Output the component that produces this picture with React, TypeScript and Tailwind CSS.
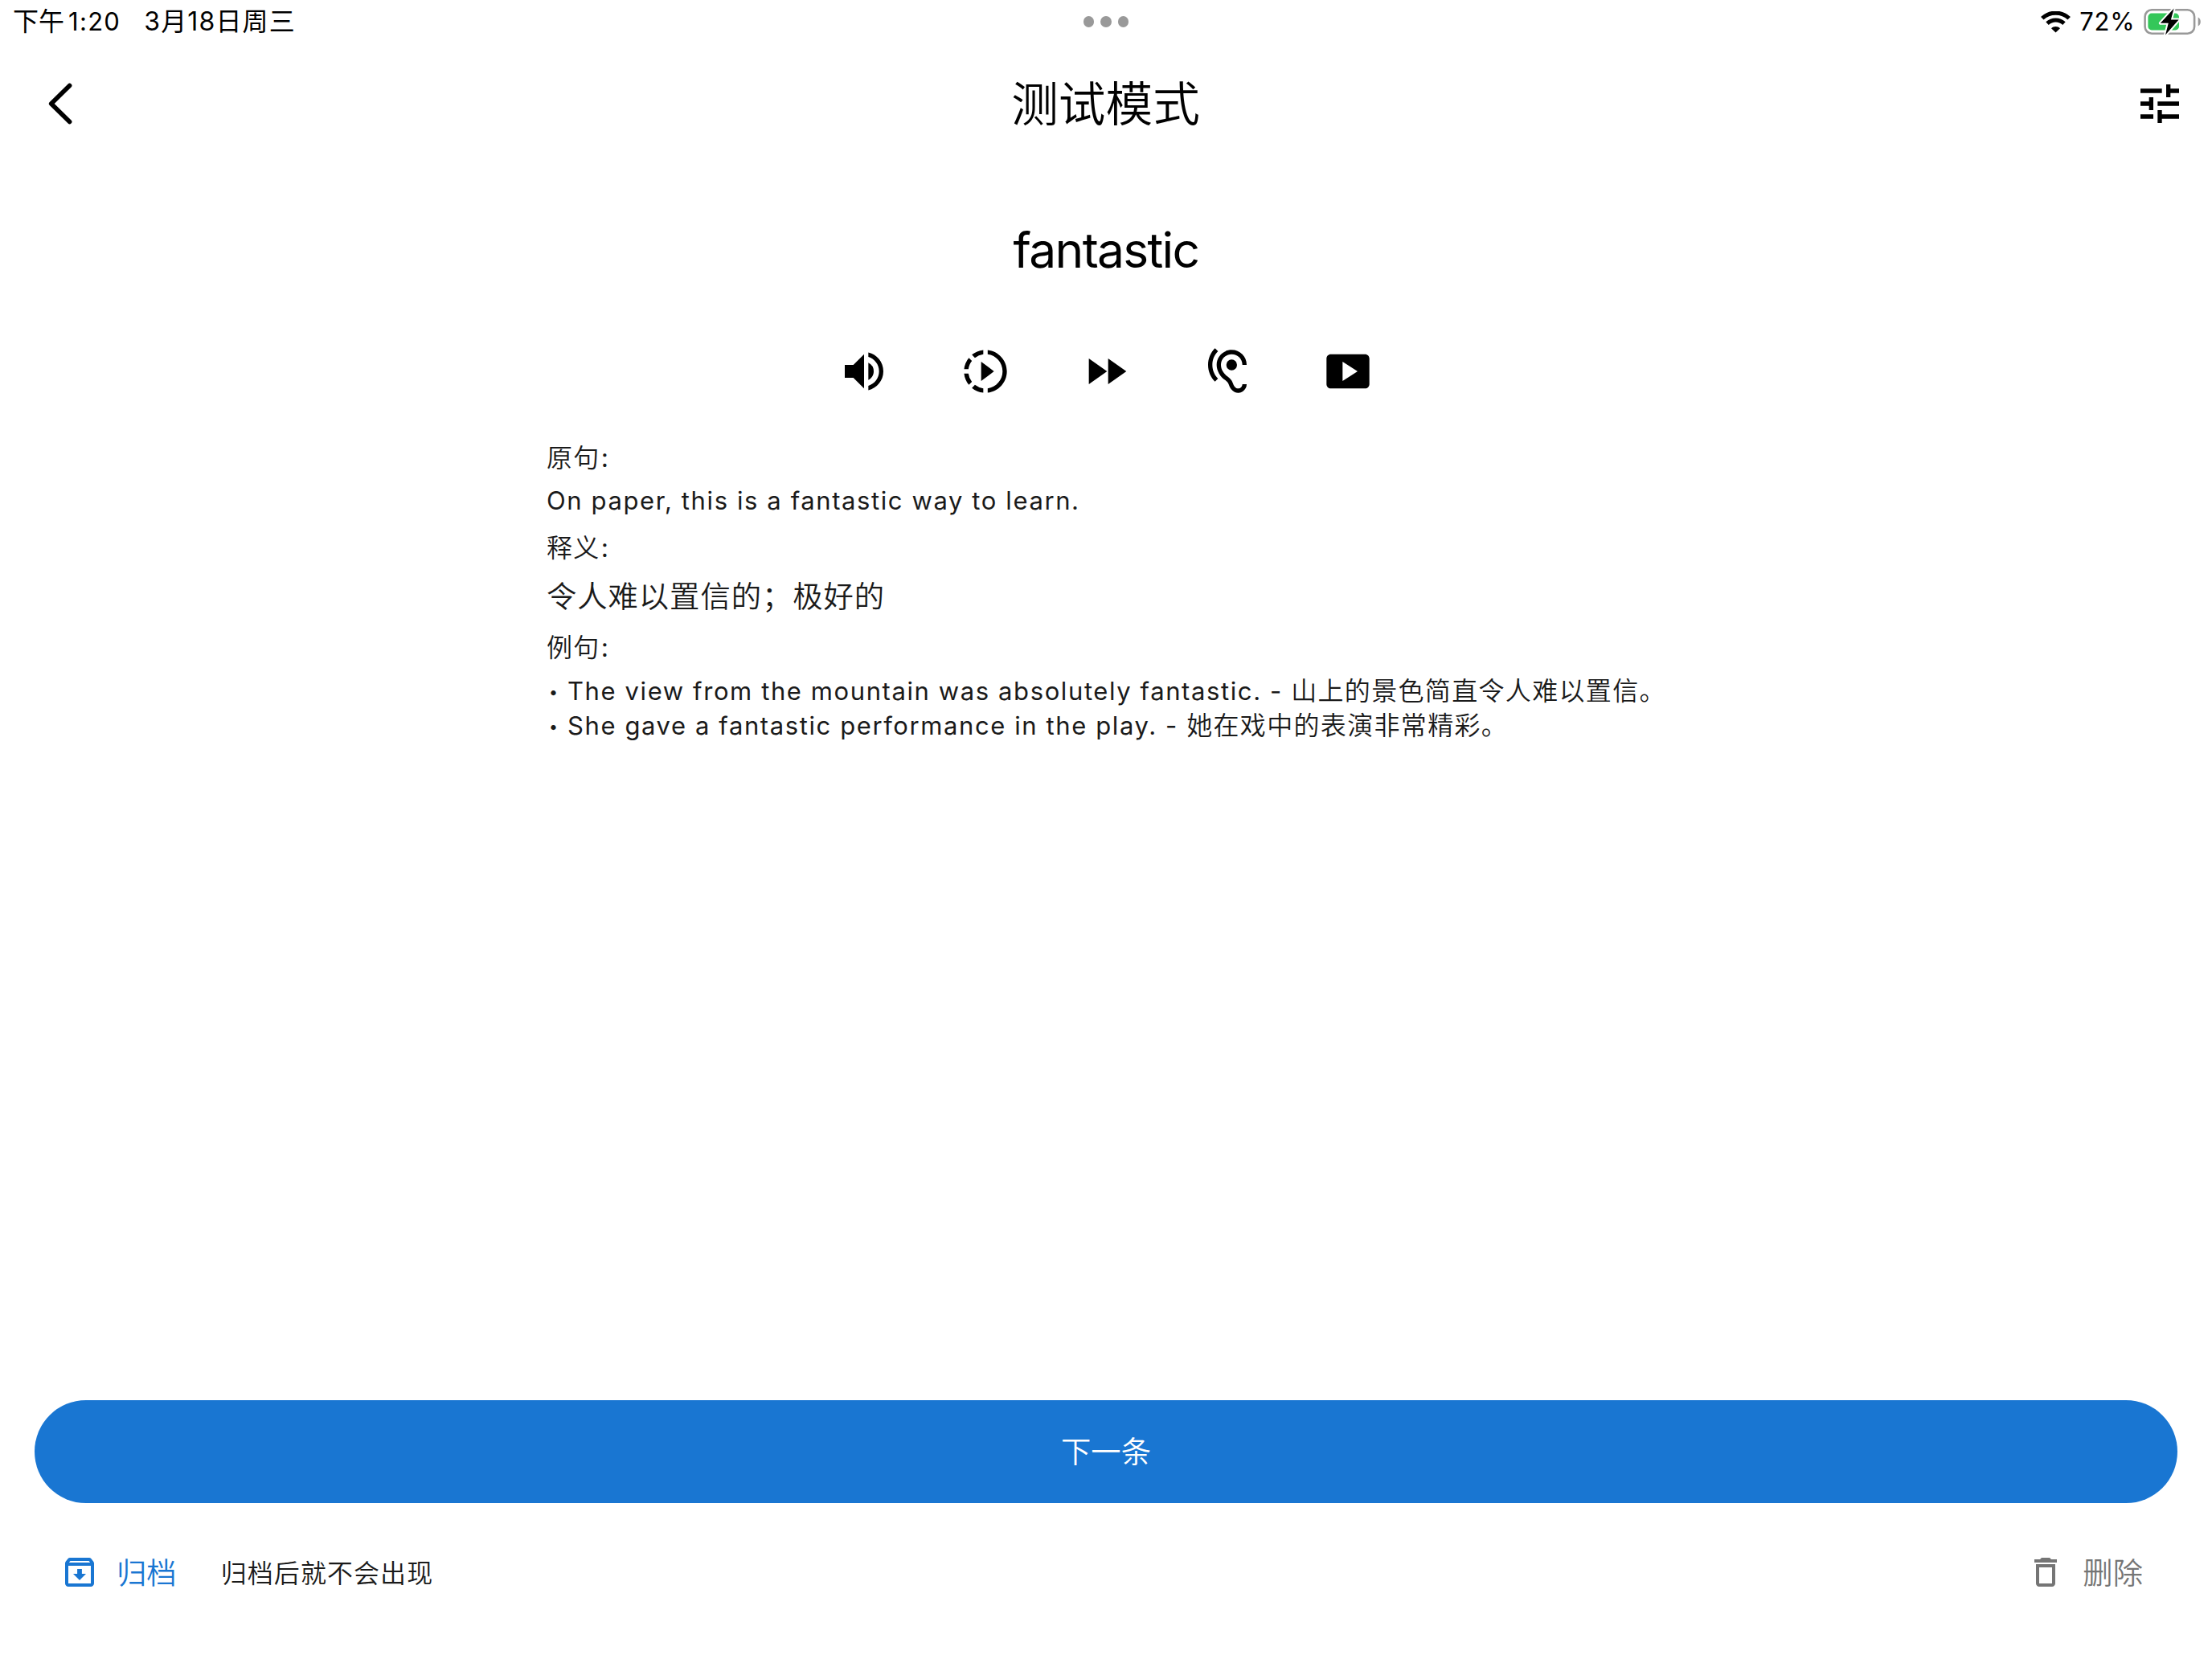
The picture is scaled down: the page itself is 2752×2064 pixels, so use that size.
import React from "react";
import {
  MdDeleteOutline,
  MdFastForward,
  MdHearing,
  MdOutlineArchive,
  MdSlowMotionVideo,
  MdSmartDisplay,
  MdTune,
  MdVolumeUp,
} from "react-icons/md";

const actions = [
  { name: "发音", Icon: MdVolumeUp },
  { name: "慢速", Icon: MdSlowMotionVideo },
  { name: "快进", Icon: MdFastForward },
  { name: "听力", Icon: MdHearing },
  { name: "视频", Icon: MdSmartDisplay },
];

const examples = [
  { en: "The view from the mountain was absolutely fantastic.", zh: "山上的景色简直令人难以置信。" },
  { en: "She gave a fantastic performance in the play.", zh: "她在戏中的表演非常精彩。" },
];

function StatusBar() {
  return (
    <div className="grid h-[54px] grid-cols-3 items-center text-[31px] leading-[54px]">
      <div className="flex pl-4">
        <span className="text-[32px]">下午</span>
        <span className="ml-[5px] tracking-[1.3px]">1:20</span>
        <span className="ml-[29px] text-[32px] tracking-[1.15px]">3月18日周三</span>
      </div>
      <div className="flex justify-center gap-2">
        <span className="size-[13.5px] rounded-full bg-[#999999]"></span>
        <span className="size-[13.5px] rounded-full bg-[#999999]"></span>
        <span className="size-[13.5px] rounded-full bg-[#999999]"></span>
      </div>
      <div className="flex items-center justify-end pr-[13px]">
        <svg className="h-[27px] w-[37px]" viewBox="0 0 37 27" fill="none" stroke="#000">
          <path d="M1.8 8.8C11 -0.1 26 -0.1 35.2 8.8" strokeWidth="5" />
          <path d="M8 15.2C14 9.6 23 9.6 29 15.2" strokeWidth="5" />
          <path d="M18.5 26.6L13 21.2C16 18.2 21 18.2 24 21.2Z" fill="#000" stroke="none" />
        </svg>
        <span className="ml-[11px] tracking-[0.8px]">72%</span>
        <svg className="ml-[9.5px] h-[38px] w-[73px]" viewBox="0 0 73 38">
          <rect x="2.6" y="4.3" width="61.5" height="29.4" rx="8.5" fill="none" stroke="#999" strokeWidth="2.6" />
          <rect x="6.4" y="8.6" width="38.6" height="20.8" rx="4.5" fill="#34c759" />
          <path d="M68.7 13.5C72.8 15.2 72.8 22.8 68.7 24.5Z" fill="#999" />
          <path
            d="M38.6 2.4L21.8 20.8H31.8L28 35.4L44.6 16.6H34.9Z"
            fill="#000"
            stroke="#fff"
            strokeWidth="4"
            strokeLinejoin="round"
            paintOrder="stroke"
          />
        </svg>
      </div>
    </div>
  );
}

function Header() {
  return (
    <header className="flex h-[149px] items-center justify-between px-[33px]">
      <button className="size-16" aria-label="返回">
        <svg className="size-16" viewBox="0 0 64 64" fill="none" stroke="#000" strokeWidth="5.6">
          <path d="M53.6 9.4L30.7 32L53.6 54.6" strokeLinecap="round" strokeLinejoin="round" />
        </svg>
      </button>
      <h1 className="pt-[3px] pr-px text-[58.67px] leading-[76px] font-[350]">测试模式</h1>
      <button className="size-16" aria-label="设置">
        <MdTune className="size-16" />
      </button>
    </header>
  );
}

function Label({ text }: { text: string }) {
  return (
    <p className="h-[48px] leading-[48px] tracking-[1.33px]">
      {text}
      <span className="ml-[1px] font-normal">:</span>
    </p>
  );
}

function WordDetail() {
  return (
    <section className="mx-auto w-[1392px] pt-[52px] text-[32px] font-[350] whitespace-nowrap text-[#1a1a1a]">
      <Label text="原句" />
      <p className="mt-[5px] mb-[11px] h-[48px] text-[31px] leading-[48px] font-normal tracking-[1.6px]">
        On paper, this is a fantastic way to learn.
      </p>
      <Label text="释义" />
      <p className="mt-[11px] mb-[13px] h-[52px] text-[37.33px] leading-[52px] tracking-[0.95px]">
        令人难以置信的；极好的
      </p>
      <Label text="例句" />
      <ul className="mt-[8px] leading-[43.3px] tracking-[1.33px]">
        {examples.map(({ en, zh }) => (
          <li key={en} className="flex h-[43.3px]">
            <span className="w-[26px] shrink-0 pt-[2px] pl-[2px] text-[23px]">•</span>
            <span className="shrink-0 text-[31px] font-normal tracking-[1.6px] whitespace-pre">{en} - </span>
            <span>{zh}</span>
          </li>
        ))}
      </ul>
    </section>
  );
}

function Footer() {
  return (
    <footer className="mt-auto px-[43px]">
      <button className="block h-32 w-full rounded-full bg-[#1976d2] pt-[2px] text-[37.33px] leading-[126px] font-[350] text-white">
        下一条
      </button>
      <div className="flex h-[194px] items-start justify-between pt-[62px]">
        <div className="flex h-12 items-center pl-8">
          <button className="flex h-12 items-center text-[37.33px] font-[350] text-[#1976d2]">
            <MdOutlineArchive className="size-12" />
            <span className="ml-[22px] pt-[3px]">归档</span>
          </button>
          <span className="ml-[55px] pt-[3px] text-[32px] font-[350] tracking-[1.07px] text-[#1a1a1a]">
            归档后就不会出现
          </span>
        </div>
        <button className="flex h-12 items-center pr-[43px] text-[37.33px] font-[350] text-[#757575]">
          <MdDeleteOutline className="size-12" />
          <span className="ml-[22px] pt-[3px]">删除</span>
        </button>
      </div>
    </footer>
  );
}

export default function App() {
  return (
    <main className="flex h-[2064px] w-[2752px] flex-col bg-white font-['Inter','Noto_Sans_CJK_SC',sans-serif] text-black">
      <StatusBar />
      <Header />
      <h2 className="mt-[68px] text-center text-[60.5px] leading-[80px] tracking-[-1.7px]">fantastic</h2>
      <div className="mt-[79px] flex justify-center gap-[86.5px]">
        {actions.map(({ name, Icon }) => (
          <button key={name} aria-label={name}>
            <Icon className="size-16" />
          </button>
        ))}
      </div>
      <WordDetail />
      <Footer />
    </main>
  );
}
